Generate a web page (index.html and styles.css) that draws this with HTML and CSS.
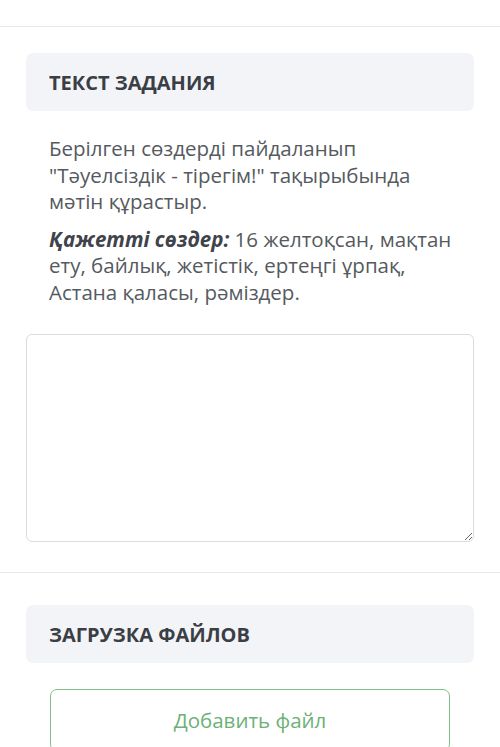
FILE: index.html
```html
<!DOCTYPE html>
<html lang="kk">
<head>
  <meta charset="UTF-8" />
  <meta name="viewport" content="width=device-width, initial-scale=1.0"/>
  <title>Текст задания</title>
  <link rel="stylesheet" href="styles.css">
</head>
<body>
  <div class="top-bar"></div>
  <section class="task">
    <div class="section-title">ТЕКСТ ЗАДАНИЯ</div>
    <div class="task-text">
      <p>Берілген сөздерді пайдаланып "Тәуелсіздік - тірегім!" тақырыбында мәтін құрастыр.</p>
      <p><b><i>Қажетті сөздер:</i></b> 16 желтоқсан, мақтан ету, байлық, жетістік, ертеңгі ұрпақ, Астана қаласы, рәміздер.</p>
    </div>
    <textarea class="answer"></textarea>
  </section>
  <section class="upload">
    <div class="section-title">ЗАГРУЗКА ФАЙЛОВ</div>
    <button class="add-file-btn">Добавить файл</button>
  </section>
</body>
</html>
```

FILE: styles.css
```css
* {
  margin: 0;
  padding: 0;
  box-sizing: border-box;
  font-family: 'Open Sans', sans-serif;
}

body {
  background: #fff;
  color: #555a60;
  width: 500px;
  overflow: hidden;
}

.top-bar {
  height: 27px;
  border-bottom: 1px solid #e8e8ea;
}

.task {
  padding: 26px 26px 30px;
  border-bottom: 1px solid #e8e8ea;
}

.section-title {
  background: #f3f4f7;
  border-radius: 7px;
  height: 58px;
  padding: 0 23px;
  display: flex;
  align-items: center;
  font-size: 20px;
  font-weight: 700;
  color: #3a3e45;
}

.task-text {
  padding: 24px 8px 0 23px;
  font-size: 20.5px;
  line-height: 26.5px;
}

.task-text p {
  margin-bottom: 11px;
}

.task-text b {
  color: #3f434a;
}

.answer {
  display: block;
  width: 100%;
  height: 208px;
  margin-top: 29px;
  border: 1px solid #dcdcdf;
  border-radius: 6px;
  resize: vertical;
  outline: none;
}

.upload {
  padding: 32px 26px 0;
}

.add-file-btn {
  display: block;
  width: 400px;
  height: 62px;
  margin: 26px 0 0 24px;
  background: #fff;
  border: 1.5px solid #80bf89;
  border-radius: 7px;
  color: #6cb176;
  font-size: 20.5px;
  cursor: pointer;
}
```
